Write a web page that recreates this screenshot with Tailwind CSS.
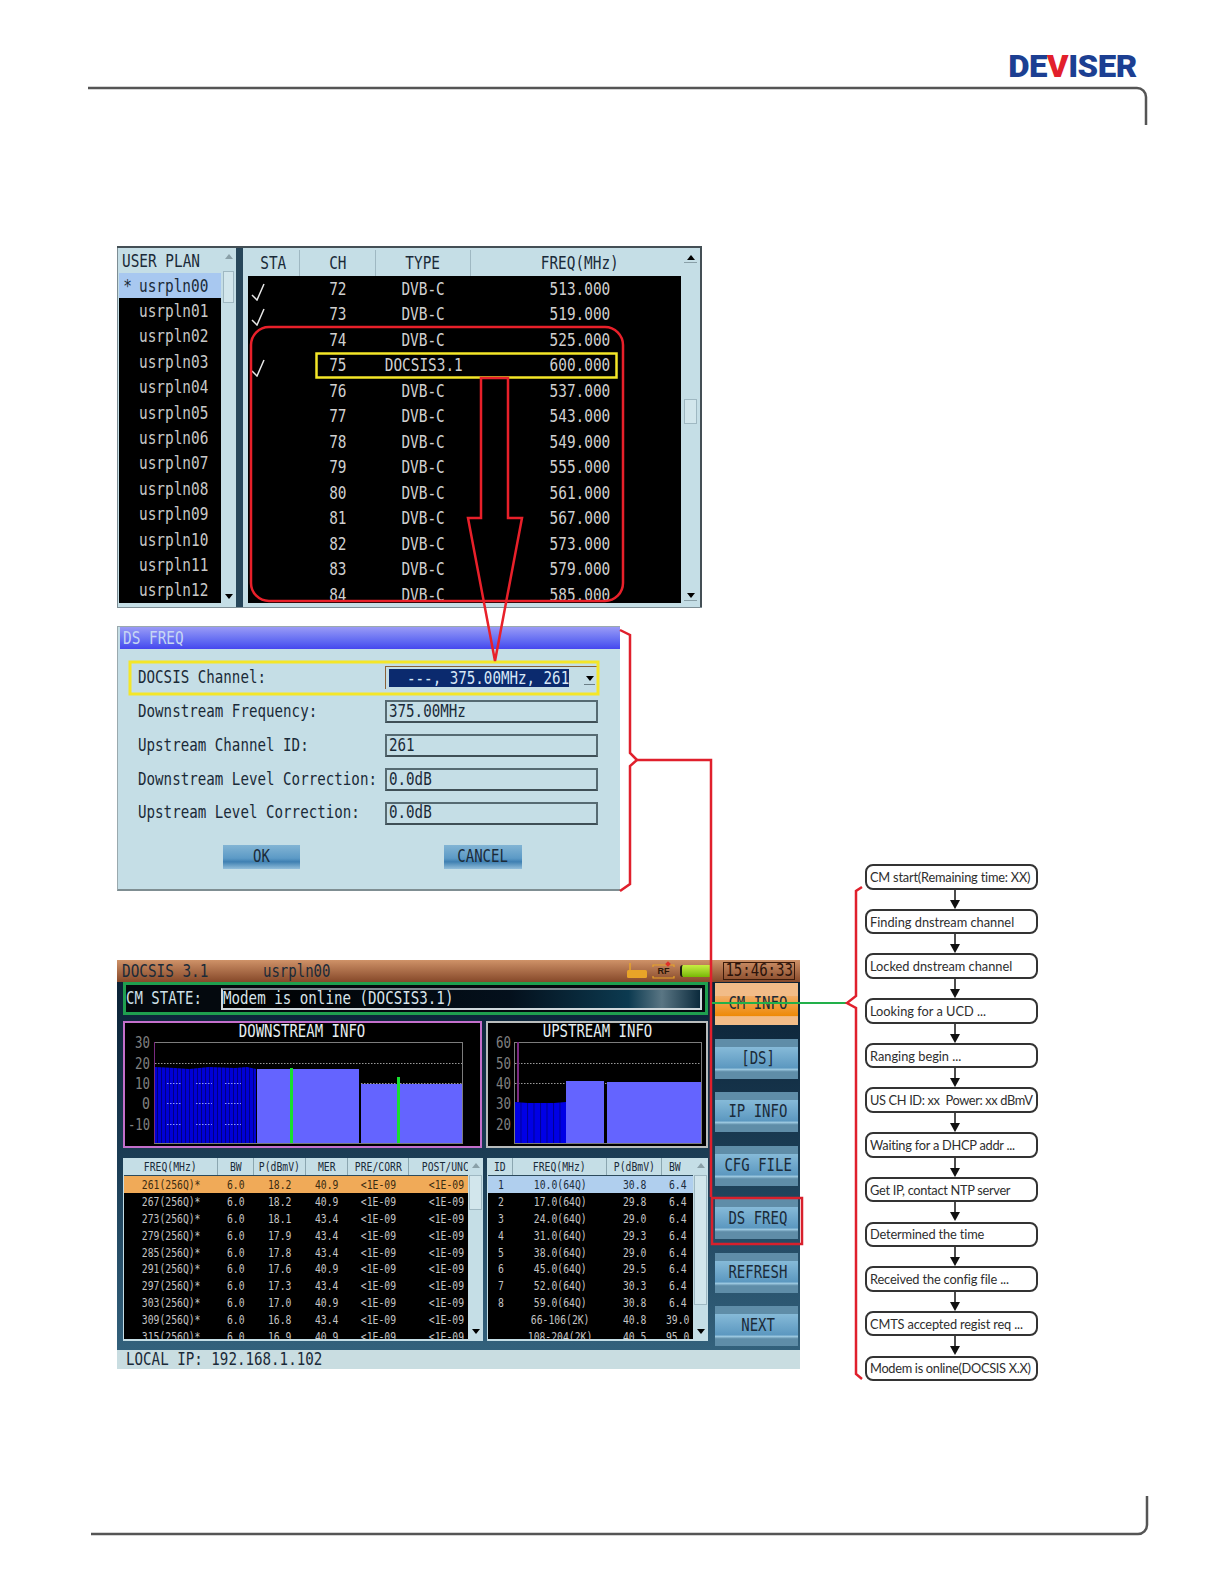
<!DOCTYPE html>
<html lang="en">
<head>
  <meta charset="UTF-8">
  <title>DOCSIS CM Info</title>
  <script src="https://cdn.jsdelivr.net/npm/@tailwindcss/browser@4"></script>
</head>
<body class="bg-white">
<div class="relative w-[1224px] h-[1584px] bg-white overflow-hidden font-['DejaVu_Sans_Mono',monospace] text-[17.5px] leading-none text-[#1a2a38]">

  <!-- Logo -->
  <div class="absolute left-[1009px] top-[52px] w-[127px] h-[28px] flex justify-center items-center">
    <span class="inline-block whitespace-nowrap scale-x-[1.03] font-['Roboto',sans-serif] font-black text-[32px] tracking-[-.5px] text-[#1c3f92]">DE<span class="text-[#e2202c]">V</span>ISER</span>
  </div>

  <!-- User plan window -->
  <div class="absolute left-[117px] top-[246px] w-[585px] h-[361px] flex bg-[#27465a] border-t-2 border-r-2 border-[#444f55] shadow-[0_1px_0_#7d8d94]">
    <div class="w-[119px] shrink-0 bg-[#c5dee6] border-l border-[#7d8d94] pl-[1px] flex flex-col">
      <div class="h-[25px] shrink-0 flex items-center pl-[3px] text-[18px]"><span class="inline-block whitespace-nowrap origin-left scale-x-[.8]">USER PLAN</span></div>
      <div class="flex h-[330px]">
        <div id="plans" class="w-[102px] bg-black overflow-hidden"></div>
        <div class="flex-1 flex flex-col items-center justify-between py-[1px]">
          <div class="w-full flex flex-col items-center">
            <div class="w-0 h-0 -mt-[20px] border-x-[4px] border-x-transparent border-b-[5px] border-b-[#8aa0a8]"></div>
            <div class="w-[11px] h-[32px] mt-[12px] border border-[#9fb8c2] bg-[#d2e6ec]"></div>
          </div>
          <div class="w-0 h-0 mb-[3px] border-x-[4px] border-x-transparent border-t-[5px] border-t-black"></div>
        </div>
      </div>
    </div>
    <div class="flex-1 ml-[7px] bg-[#c5dee6] flex pl-[5px] pt-[2px] pb-[4px]">
      <div class="w-[433px] shrink-0 flex flex-col">
        <div class="h-[26px] shrink-0 grid grid-cols-[52px_76px_95px_210px] text-[18px]">
          <div class="flex justify-center items-center border-r border-[#9fb8c2]"><span class="inline-block whitespace-nowrap scale-x-[.8]">STA</span></div>
          <div class="flex justify-center items-center border-r border-[#9fb8c2]"><span class="inline-block whitespace-nowrap scale-x-[.8]">CH</span></div>
          <div class="flex justify-center items-center border-r border-[#9fb8c2]"><span class="inline-block whitespace-nowrap scale-x-[.8]">TYPE</span></div>
          <div class="flex justify-center items-center pl-[8px]"><span class="inline-block whitespace-nowrap scale-x-[.8]">FREQ(MHz)</span></div>
        </div>
        <div id="channels" class="flex-1 bg-black overflow-hidden"></div>
      </div>
      <div class="flex-1 flex flex-col items-center justify-between pt-[5px] pb-[2px]">
        <div class="w-full flex flex-col items-center">
          <div class="w-0 h-0 border-x-[4px] border-x-transparent border-b-[5px] border-b-black"></div>
          <div class="w-[13px] h-px bg-[#8aa0a8] mt-[2px]"></div>
          <div class="w-[13px] h-[25px] mt-[136px] border border-[#9fb8c2] bg-[#d2e6ec]"></div>
        </div>
        <div class="flex flex-col items-center">
          <div class="w-0 h-0 border-x-[4px] border-x-transparent border-t-[5px] border-t-black"></div>
          <div class="w-[13px] h-px bg-[#8aa0a8] mt-[2px]"></div>
        </div>
      </div>
    </div>
  </div>

  <!-- DS FREQ dialog -->
  <div class="absolute left-[117px] top-[626px] w-[503px] h-[265px] bg-[#c5dee6] border-l border-t border-[#9aa9ae] border-b-2 border-b-[#7f8e92]">
    <div class="h-[22px] ml-[2px] pl-[3px] flex items-center bg-linear-to-b from-[#9a9af6] to-[#4646ee] text-[#c6d6f4] text-[18px]"><span class="inline-block whitespace-nowrap origin-left scale-x-[.8]">DS FREQ</span></div>
    <div class="mt-[12px]">
      <div class="h-[33.8px] flex items-center">
        <div class="w-[267px] pl-[20px]"><span class="inline-block whitespace-nowrap origin-left scale-x-[.81]">DOCSIS Channel:</span></div>
        <div class="w-[213px] h-[23px] border-l border-t border-[#8a6238] flex items-center pl-[3px] relative">
          <div class="w-[180px] h-[18px] bg-[#0b2a6e] text-[#d8e8f8] flex items-center justify-end"><span class="inline-block whitespace-nowrap origin-right scale-x-[.81]">---, 375.00MHz, 261</span></div>
          <div class="absolute right-[3px] top-[9px] w-[11px] h-[9px] border-b border-[#6b7f87] flex justify-center"><div class="w-0 h-0 border-x-[4px] border-x-transparent border-t-[5px] border-t-black"></div></div>
        </div>
      </div>
      <div class="h-[33.8px] flex items-center">
        <div class="w-[267px] pl-[20px]"><span class="inline-block whitespace-nowrap origin-left scale-x-[.81]">Downstream Frequency:</span></div>
        <div class="w-[213px] h-[23px] border-2 border-[#566a72] border-b-[#3f4f56] flex items-center pl-[2px]"><span class="inline-block whitespace-nowrap origin-left scale-x-[.81]">375.00MHz</span></div>
      </div>
      <div class="h-[33.8px] flex items-center">
        <div class="w-[267px] pl-[20px]"><span class="inline-block whitespace-nowrap origin-left scale-x-[.81]">Upstream Channel ID:</span></div>
        <div class="w-[213px] h-[23px] border-2 border-[#566a72] border-b-[#3f4f56] flex items-center pl-[2px]"><span class="inline-block whitespace-nowrap origin-left scale-x-[.81]">261</span></div>
      </div>
      <div class="h-[33.8px] flex items-center">
        <div class="w-[267px] pl-[20px]"><span class="inline-block whitespace-nowrap origin-left scale-x-[.81]">Downstream Level Correction:</span></div>
        <div class="w-[213px] h-[23px] border-2 border-[#566a72] border-b-[#3f4f56] flex items-center pl-[2px]"><span class="inline-block whitespace-nowrap origin-left scale-x-[.81]">0.0dB</span></div>
      </div>
      <div class="h-[33.8px] flex items-center">
        <div class="w-[267px] pl-[20px]"><span class="inline-block whitespace-nowrap origin-left scale-x-[.81]">Upstream Level Correction:</span></div>
        <div class="w-[213px] h-[23px] border-2 border-[#566a72] border-b-[#3f4f56] flex items-center pl-[2px]"><span class="inline-block whitespace-nowrap origin-left scale-x-[.81]">0.0dB</span></div>
      </div>
    </div>
    <div class="flex mt-[15px] pl-[105px] gap-[144px]">
      <div class="w-[77px] h-[24px] flex justify-center items-center bg-[linear-gradient(#82b4d4,#5c9ac6_55%,#3f80b2_70%,#92bedA)]"><span class="inline-block scale-x-[.8]">OK</span></div>
      <div class="w-[78px] h-[24px] flex justify-center items-center bg-[linear-gradient(#82b4d4,#5c9ac6_55%,#3f80b2_70%,#92bedA)]"><span class="inline-block scale-x-[.8]">CANCEL</span></div>
    </div>
  </div>

  <!-- Analyzer screen -->
  <div class="absolute left-[117px] top-[960px] w-[683px] h-[409px] flex flex-col">
    <div class="h-[22px] shrink-0 flex items-center pl-[5px] pr-[5px] pt-[2px] bg-linear-to-b from-[#cf9268] to-[#86492a]">
      <div class="w-[141px] shrink-0"><span class="inline-block whitespace-nowrap origin-left scale-x-[.82]">DOCSIS 3.1</span></div>
      <div class="w-[100px] shrink-0"><span class="inline-block whitespace-nowrap origin-left scale-x-[.8]">usrpln00</span></div>
      <div class="ml-auto flex items-center -mt-[2px]">
        <svg width="20" height="16" viewBox="0 0 20 16"><path d="M3 0v8" stroke="#e8a428" stroke-width="1.5"/><rect x="0" y="7" width="20" height="8" rx="1.500" fill="#e8a428"/></svg>
        <div class="relative w-[23px] h-[15px] ml-[5px] flex items-center justify-center font-['Liberation_Sans',sans-serif] font-bold text-[9px] text-[#2a1608]">
          <svg class="absolute inset-0" width="23" height="15" viewBox="0 0 23 15" fill="none"><path d="M1 3V1H22V3M1 12V14H22V12" stroke="#e8a428" stroke-width="1.2"/></svg>
          RF
          <div class="absolute -top-[2px] right-[5px] w-[4px] h-[4px] bg-[#e0302a] rotate-45"></div>
        </div>
        <div class="w-[30px] h-[12px] ml-[5px] border-l-2 border-[#1c1c10] rounded-l-[3px] bg-linear-to-b from-[#c8ee40] to-[#78b800]"></div>
        <div class="w-[72px] h-[18px] ml-[13px] border border-[#3a1a0a] flex justify-center items-center text-[#2a120a]"><span class="inline-block whitespace-nowrap scale-x-[.8]">15:46:33</span></div>
      </div>
    </div>

    <div class="h-[368px] shrink-0 flex pl-[6px] pr-[2px] bg-linear-to-b from-[#0b2236] via-[#1c3e56] to-[#33617c]">
      <div class="w-[585px] shrink-0 flex flex-col">
        <div class="h-[33px] shrink-0 border-[3px] border-[#1f9f4f] bg-[#04090e] flex items-center">
          <div class="w-[95px] shrink-0 text-[#cfe0e8] pt-[1px]"><span class="inline-block whitespace-nowrap origin-left scale-x-[.8]">CM STATE:</span></div>
          <div class="w-[481px] h-[22px] shrink-0 border-2 border-[#cfd8dc] border-t-[#7d8a90] bg-[linear-gradient(90deg,#000,#04101c_60%,#0c3a50_85%,#5a7684_92%,#0b2a3c)] text-[#d8e4ea] flex items-center pt-[1px]"><span class="inline-block whitespace-nowrap origin-left scale-x-[.81]">Modem is online (DOCSIS3.1)</span></div>
        </div>

        <div class="h-[127px] shrink-0 mt-[6px] flex gap-[4px]">
          <div class="w-[359px] border-2 border-[#c46fcb] bg-black flex flex-col">
            <div class="h-[17px] shrink-0 flex justify-center items-center text-[#e6eef2]"><span class="inline-block whitespace-nowrap scale-x-[.8]">DOWNSTREAM INFO</span></div>
            <svg width="355" height="106" viewBox="0 0 355 106" class="block overflow-visible font-['DejaVu_Sans_Mono',monospace]">
              <defs><pattern id="dsStripe" width="4" height="10" patternUnits="userSpaceOnUse"><rect width="4" height="10" fill="#0000d6"/><rect width="1" height="10" fill="#000080"/></pattern></defs>
              <g fill="#808080" font-size="16" text-anchor="end">
                <text x="25" y="8" textLength="15" lengthAdjust="spacingAndGlyphs">30</text>
                <text x="25" y="29" textLength="15" lengthAdjust="spacingAndGlyphs">20</text>
                <text x="25" y="49" textLength="15" lengthAdjust="spacingAndGlyphs">10</text>
                <text x="25" y="69" textLength="8" lengthAdjust="spacingAndGlyphs">0</text>
                <text x="25" y="90" textLength="22" lengthAdjust="spacingAndGlyphs">-10</text>
              </g>
              <rect x="29.5" y="2.5" width="308" height="101" fill="none" stroke="#7c7c7c"/>
              <path d="M30 23.5H337" stroke="#9a9a9a" stroke-dasharray="1.5 1.5"/>
              <path d="M30 27l20 1 14 1 20-2 26 1 12-1 9 2V103H30z" fill="url(#dsStripe)"/>
              <rect x="132" y="29" width="102" height="74" fill="#6464ff"/>
              <rect x="236" y="44" width="101" height="59" fill="#6464ff"/>
              <path d="M236 43.5H337" stroke="#9a9a9a" stroke-dasharray="1.5 1.5"/>
              <path d="M42 43.5h15M71 43.5h16M100 43.5h16M42 63.5h15M71 63.5h16M100 63.5h16M42 84.5h15M71 84.5h16M100 84.5h16" stroke="#8c96ff" stroke-dasharray="1.5 1.5"/>
              <rect x="165" y="28" width="3" height="75" fill="#18e030"/>
              <rect x="272" y="37" width="3" height="66" fill="#18e030"/>
              <rect x="29" y="2" width="1" height="101" fill="#7a2a80"/>
            </svg>
          </div>
          <div class="w-[222px] border-2 border-[#b9bcbc] bg-black flex flex-col">
            <div class="h-[17px] shrink-0 flex justify-center items-center text-[#e6eef2]"><span class="inline-block whitespace-nowrap scale-x-[.8]">UPSTREAM INFO</span></div>
            <svg width="218" height="106" viewBox="0 0 218 106" class="block overflow-visible font-['DejaVu_Sans_Mono',monospace]">
              <defs><pattern id="usStripe" width="6.5" height="10" patternUnits="userSpaceOnUse"><rect width="6.5" height="10" fill="#0000e6"/><rect width="1" height="10" fill="#000090"/></pattern></defs>
              <g fill="#808080" font-size="16" text-anchor="end">
                <text x="23" y="8" textLength="15" lengthAdjust="spacingAndGlyphs">60</text>
                <text x="23" y="29" textLength="15" lengthAdjust="spacingAndGlyphs">50</text>
                <text x="23" y="49" textLength="15" lengthAdjust="spacingAndGlyphs">40</text>
                <text x="23" y="69" textLength="15" lengthAdjust="spacingAndGlyphs">30</text>
                <text x="23" y="90" textLength="15" lengthAdjust="spacingAndGlyphs">20</text>
              </g>
              <rect x="26.5" y="2.5" width="187" height="101" fill="none" stroke="#7c7c7c"/>
              <path d="M27 23.5H213M27 43.5H213" stroke="#9a9a9a" stroke-dasharray="1.5 1.5"/>
              <path d="M27 62l13 1 26 0 12-1V103H27z" fill="url(#usStripe)"/>
              <rect x="78" y="41" width="38" height="62" fill="#6464ff"/>
              <rect x="119" y="42" width="94" height="61" fill="#6464ff"/>
              <rect x="29" y="2" width="2" height="60" fill="#7a2a80"/>
            </svg>
          </div>
        </div>

        <div class="h-[183px] shrink-0 mt-[10px] flex gap-[4px]">
          <div class="w-[360px] bg-[#c5dee6] pl-[1px] pb-[2px] flex">
            <div class="w-[344px] shrink-0 flex flex-col overflow-hidden text-[13px]">
              <div class="h-[18px] shrink-0 grid grid-cols-[94px_36px_52px_42px_61px_59px] border-b border-[#2c4a5c]">
                <div class="flex justify-center items-center border-r border-[#8ba6b0]"><span class="inline-block whitespace-nowrap scale-x-[.75]">FREQ(MHz)</span></div>
                <div class="flex justify-center items-center border-r border-[#8ba6b0]"><span class="inline-block whitespace-nowrap scale-x-[.75]">BW</span></div>
                <div class="flex justify-center items-center border-r border-[#8ba6b0]"><span class="inline-block whitespace-nowrap scale-x-[.75]">P(dBmV)</span></div>
                <div class="flex justify-center items-center border-r border-[#8ba6b0]"><span class="inline-block whitespace-nowrap scale-x-[.75]">MER</span></div>
                <div class="flex justify-center items-center border-r border-[#8ba6b0]"><span class="inline-block whitespace-nowrap scale-x-[.75]">PRE/CORR</span></div>
                <div class="flex justify-center items-center pl-[14px] overflow-hidden"><span class="inline-block whitespace-nowrap scale-x-[.75]">POST/UNC</span></div>
              </div>
              <div id="dsRows" class="flex-1 bg-black overflow-hidden"></div>
            </div>
            <div class="flex-1 flex flex-col items-center justify-between pt-[5px] pb-[2px]">
              <div class="w-full flex flex-col items-center">
                <div class="w-0 h-0 border-x-[4px] border-x-transparent border-b-[5px] border-b-[#8aa0a8]"></div>
                <div class="w-[13px] h-[35px] mt-[7px] border border-[#9fb8c2] bg-[#d2e6ec]"></div>
              </div>
              <div class="w-0 h-0 mb-[3px] border-x-[4px] border-x-transparent border-t-[5px] border-t-black"></div>
            </div>
          </div>
          <div class="w-[221px] bg-[#c5dee6] pl-[1px] pb-[2px] flex">
            <div class="w-[205px] shrink-0 flex flex-col overflow-hidden text-[13px]">
              <div class="h-[18px] shrink-0 grid grid-cols-[25px_94px_55px_31px] border-b border-[#2c4a5c]">
                <div class="flex justify-center items-center border-r border-[#8ba6b0]"><span class="inline-block whitespace-nowrap scale-x-[.75]">ID</span></div>
                <div class="flex justify-center items-center border-r border-[#8ba6b0]"><span class="inline-block whitespace-nowrap scale-x-[.75]">FREQ(MHz)</span></div>
                <div class="flex justify-center items-center border-r border-[#8ba6b0]"><span class="inline-block whitespace-nowrap scale-x-[.75]">P(dBmV)</span></div>
                <div class="flex justify-center items-center pr-[6px]"><span class="inline-block whitespace-nowrap scale-x-[.75]">BW</span></div>
              </div>
              <div id="usRows" class="flex-1 bg-black overflow-hidden"></div>
            </div>
            <div class="flex-1 flex flex-col items-center justify-between pt-[5px] pb-[2px]">
              <div class="w-full flex flex-col items-center">
                <div class="w-0 h-0 border-x-[4px] border-x-transparent border-b-[5px] border-b-[#8aa0a8]"></div>
                <div class="w-[13px] h-[130px] mt-[7px] border border-[#9fb8c2] bg-[#d2e6ec]"></div>
              </div>
              <div class="w-0 h-0 mb-[3px] border-x-[4px] border-x-transparent border-t-[5px] border-t-black"></div>
            </div>
          </div>
        </div>
      </div>

      <!-- Softkeys -->
      <div class="w-[83px] shrink-0 ml-[7px] mt-[1px] flex flex-col gap-[13.5px]">
        <div class="h-[42px] shrink-0 pl-[3px] flex justify-center items-center bg-[linear-gradient(#f2bc88_0_30%,#f2ae6a_30%,#ee8a08_78%,#f2bc88_80%)]"><span class="inline-block whitespace-nowrap scale-x-[.8]">CM INFO</span></div>
        <div class="h-[40px] shrink-0 pl-[3px] flex justify-center items-center bg-[linear-gradient(#5f8da8_0_20%,#86bad8_20%,#5c98c0_72%,#9cc8e0_76%,#5f8da8_82%)]"><span class="inline-block whitespace-nowrap scale-x-[.8]">[DS]</span></div>
        <div class="h-[40px] shrink-0 pl-[3px] flex justify-center items-center bg-[linear-gradient(#5f8da8_0_20%,#86bad8_20%,#5c98c0_72%,#9cc8e0_76%,#5f8da8_82%)]"><span class="inline-block whitespace-nowrap scale-x-[.8]">IP INFO</span></div>
        <div class="h-[40px] shrink-0 pl-[3px] flex justify-center items-center bg-[linear-gradient(#5f8da8_0_20%,#86bad8_20%,#5c98c0_72%,#9cc8e0_76%,#5f8da8_82%)]"><span class="inline-block whitespace-nowrap scale-x-[.8]">CFG FILE</span></div>
        <div class="h-[40px] shrink-0 pl-[3px] flex justify-center items-center bg-[linear-gradient(#5f8da8_0_20%,#86bad8_20%,#5c98c0_72%,#9cc8e0_76%,#5f8da8_82%)]"><span class="inline-block whitespace-nowrap scale-x-[.8]">DS FREQ</span></div>
        <div class="h-[40px] shrink-0 pl-[3px] flex justify-center items-center bg-[linear-gradient(#5f8da8_0_20%,#86bad8_20%,#5c98c0_72%,#9cc8e0_76%,#5f8da8_82%)]"><span class="inline-block whitespace-nowrap scale-x-[.8]">REFRESH</span></div>
        <div class="h-[40px] shrink-0 pl-[3px] flex justify-center items-center bg-[linear-gradient(#5f8da8_0_20%,#86bad8_20%,#5c98c0_72%,#9cc8e0_76%,#5f8da8_82%)]"><span class="inline-block whitespace-nowrap scale-x-[.8]">NEXT</span></div>
      </div>
    </div>

    <div class="h-[19px] shrink-0 bg-[#c9dde1] flex items-center pl-[9px]"><span class="inline-block whitespace-nowrap origin-left scale-x-[.81]">LOCAL IP: 192.168.1.102</span></div>
  </div>

  <!-- CM registration flow -->
  <div id="flow" class="absolute left-[865px] top-[864px] w-[173px] flex flex-col font-['Lato',sans-serif] text-[12.8px] text-[#2e2e2e]"></div>

  <!-- Page frame and red/yellow/green callouts drawn over the screens -->
  <svg class="absolute inset-0 pointer-events-none" width="1224" height="1584" viewBox="0 0 1224 1584" fill="none">
    <path d="M88 88H1137a9 9 0 0 1 9 9V125" stroke="#555" stroke-width="2.5"/>
    <path d="M91 1534H1138a9 9 0 0 0 9-9V1496" stroke="#555" stroke-width="2.5"/>
    <rect x="251" y="327" width="372" height="274" rx="18" stroke="#e8202a" stroke-width="2.5"/>
    <rect x="316.500" y="353.500" width="300" height="24" stroke="#f4e628" stroke-width="2.5"/>
    <rect x="130" y="662" width="468" height="32" stroke="#f4e628" stroke-width="3"/>
    <path d="M481 378H508V518H522L495 661L468 518H481Z" stroke="#e8202a" stroke-width="2.5" stroke-linejoin="miter"/>
    <path d="M620 630L630 635V753L637 760L630 766V884L620 891" stroke="#e0202c" stroke-width="2.5"/>
    <path d="M637 760H711V1197" stroke="#e0202c" stroke-width="2.5"/>
    <rect x="712" y="1198" width="90" height="46" stroke="#d8202c" stroke-width="2.5"/>
    <path d="M712 1003H848" stroke="#22b04a" stroke-width="2"/>
    <path d="M862 887L856 891V996L847 1003L856 1008V1374L862 1379" stroke="#e0202c" stroke-width="2.5"/>
  </svg>
</div>

<script>
  const plans = ['usrpln00','usrpln01','usrpln02','usrpln03','usrpln04','usrpln05','usrpln06','usrpln07','usrpln08','usrpln09','usrpln10','usrpln11','usrpln12'];
  document.getElementById('plans').innerHTML = plans.map((name, i) => `
    <div class="h-[25.4px] flex items-center text-[18px] ${i === 0 ? 'bg-[#a8c8f0] text-[#1a2a38]' : 'text-[#c9c9c9]'}">
      <div class="w-[19px] shrink-0 pl-[3px] scale-x-[.8]">${i === 0 ? '*' : ''}</div>
      <span class="inline-block whitespace-nowrap origin-left ml-[1px] scale-x-[.8]">${name}</span>
    </div>`).join('');

  const channels = [
    [1,'72','DVB-C','513.000'],[1,'73','DVB-C','519.000'],[0,'74','DVB-C','525.000'],[1,'75','DOCSIS3.1','600.000'],
    [0,'76','DVB-C','537.000'],[0,'77','DVB-C','543.000'],[0,'78','DVB-C','549.000'],[0,'79','DVB-C','555.000'],
    [0,'80','DVB-C','561.000'],[0,'81','DVB-C','567.000'],[0,'82','DVB-C','573.000'],[0,'83','DVB-C','579.000'],[0,'84','DVB-C','585.000']
  ];
  const tick = '<svg width="15" height="18" viewBox="0 0 15 18" class="mt-[6px] ml-[3px]" fill="none"><path d="M1 12L6 17L13 1" stroke="#e8e8e8" stroke-width="1.5"/></svg>';
  document.getElementById('channels').innerHTML = channels.map(([on, ch, type, freq]) => `
    <div class="h-[25.5px] grid grid-cols-[52px_76px_95px_210px] text-[18px] text-[#d0d0d0]">
      <div class="flex items-center">${on ? tick : ''}</div>
      <div class="flex justify-center items-center"><span class="inline-block whitespace-nowrap scale-x-[.8]">${ch}</span></div>
      <div class="flex justify-center items-center"><span class="inline-block whitespace-nowrap scale-x-[.8]">${type}</span></div>
      <div class="flex justify-center items-center pl-[8px]"><span class="inline-block whitespace-nowrap scale-x-[.8]">${freq}</span></div>
    </div>`).join('');

  const ds = [
    ['261(256Q)*','6.0','18.2','40.9'],['267(256Q)*','6.0','18.2','40.9'],['273(256Q)*','6.0','18.1','43.4'],['279(256Q)*','6.0','17.9','43.4'],
    ['285(256Q)*','6.0','17.8','43.4'],['291(256Q)*','6.0','17.6','40.9'],['297(256Q)*','6.0','17.3','43.4'],['303(256Q)*','6.0','17.0','40.9'],
    ['309(256Q)*','6.0','16.8','43.4'],['315(256Q)*','6.0','16.9','40.9']
  ];
  document.getElementById('dsRows').innerHTML = ds.map((r, i) => `
    <div class="h-[16.9px] grid grid-cols-[94px_36px_52px_42px_61px_59px] ${i === 0 ? 'bg-[#f0aa58] text-[#3a2a12]' : 'text-[#c4c4c4]'}">
      ${[...r, '&lt;1E-09'].map(v => `<div class="flex justify-center items-center"><span class="inline-block whitespace-nowrap scale-x-[.75]">${v}</span></div>`).join('')}
      <div class="flex justify-center items-center pl-[16px]"><span class="inline-block whitespace-nowrap scale-x-[.75]">&lt;1E-09</span></div>
    </div>`).join('');

  const us = [
    ['1','10.0(64Q)','30.8','6.4'],['2','17.0(64Q)','29.8','6.4'],['3','24.0(64Q)','29.0','6.4'],['4','31.0(64Q)','29.3','6.4'],['5','38.0(64Q)','29.0','6.4'],
    ['6','45.0(64Q)','29.5','6.4'],['7','52.0(64Q)','30.3','6.4'],['8','59.0(64Q)','30.8','6.4'],['','66-106(2K)','40.8','39.0'],['','108-204(2K)','40.5','95.0']
  ];
  document.getElementById('usRows').innerHTML = us.map((r, i) => `
    <div class="h-[16.9px] grid grid-cols-[25px_94px_55px_31px] ${i === 0 ? 'bg-[#b0cfee] text-[#1c2c3c]' : 'text-[#c4c4c4]'}">
      ${r.map(v => `<div class="flex justify-center items-center"><span class="inline-block whitespace-nowrap scale-x-[.75]">${v}</span></div>`).join('')}
    </div>`).join('');

  const steps = ['<span class="tracking-[-.2px]">CM start(Remaining time: XX)</span>','Finding dnstream channel','Locked dnstream channel','Looking for a UCD ...','Ranging begin ...',
    '<span class="tracking-[-.35px]">US CH ID: xx&nbsp; Power: xx dBmV</span>','<span class="tracking-[-.25px]">Waiting for a DHCP addr ...</span>','<span class="tracking-[-.3px]">Get IP, contact NTP server</span>','<span class="tracking-[-.15px]">Determined the time</span>','<span class="tracking-[-.15px]">Received the config file ...</span>',
    '<span class="tracking-[-.15px]">CMTS accepted regist req ...</span>','<span class="tracking-[-.3px]">Modem is online(DOCSIS X.X)</span>'];
  const arrow = '<svg width="173" height="19.2" viewBox="0 0 173 19" class="block" fill="none"><path d="M90 0V12" stroke="#111" stroke-width="1.5"/><path d="M85 10H95L90 19Z" fill="#111"/></svg>';
  document.getElementById('flow').innerHTML = steps.map((s, i) => `
    <div class="h-[25.5px] shrink-0 border-2 border-[#333] rounded-[8px] flex items-center pl-[3px] pt-[1px] whitespace-nowrap">${s}</div>${i < steps.length - 1 ? arrow : ''}`).join('');
</script>
</body>
</html>
